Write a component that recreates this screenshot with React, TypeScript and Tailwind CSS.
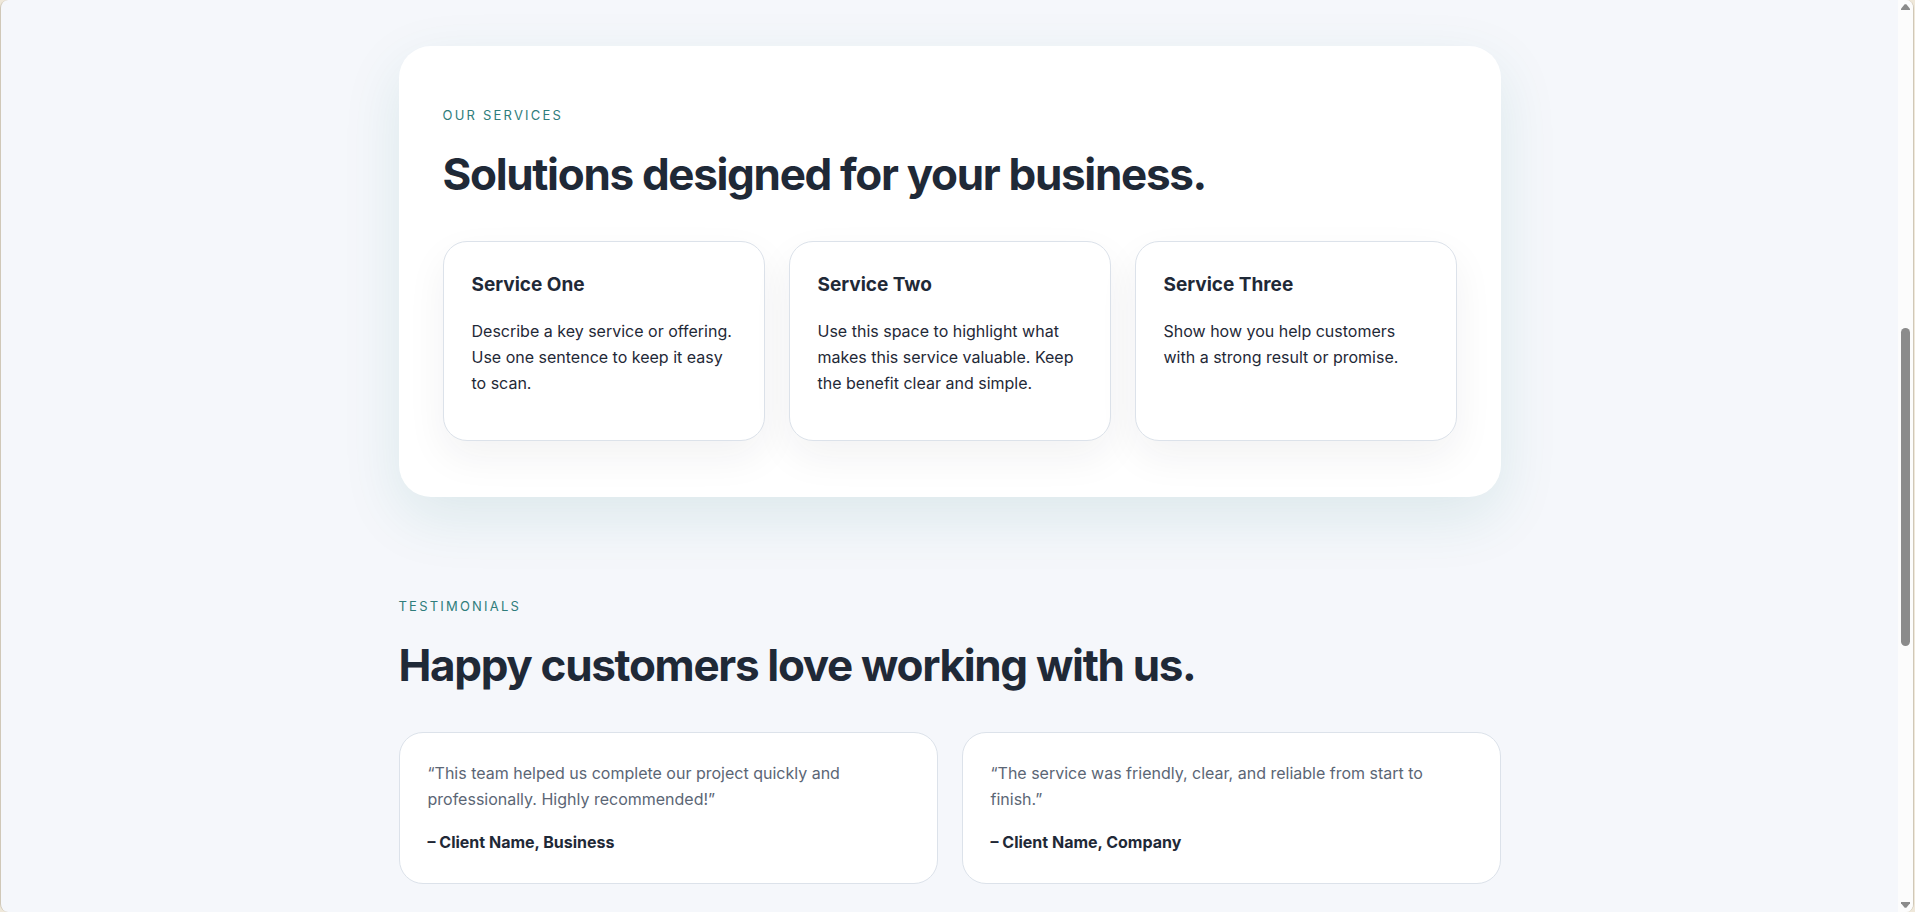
import type { ReactNode } from "react";

interface Service {
  title: string;
  text: string;
}

interface Testimonial {
  quote: string;
  author: string;
}

const services: Service[] = [
  {
    title: "Service One",
    text: "Describe a key service or offering. Use one sentence to keep it easy to scan.",
  },
  {
    title: "Service Two",
    text: "Use this space to highlight what makes this service valuable. Keep the benefit clear and simple.",
  },
  {
    title: "Service Three",
    text: "Show how you help customers with a strong result or promise.",
  },
];

const testimonials: Testimonial[] = [
  {
    quote:
      "“This team helped us complete our project quickly and professionally. Highly recommended!”",
    author: "– Client Name, Business",
  },
  {
    quote:
      "“The service was friendly, clear, and reliable from start to finish.”",
    author: "– Client Name, Company",
  },
];

function SectionHeading({ label, children }: { label: string; children: ReactNode }) {
  return (
    <header className="mb-[37px]">
      <p className="mb-4 text-[13px] leading-[26px] tracking-[0.17em] text-[#2f7d7b] uppercase">
        {label}
      </p>
      <h2 className="text-[44px] leading-[60px] font-bold tracking-[-0.03em]">
        {children}
      </h2>
    </header>
  );
}

function ServiceCard({ service }: { service: Service }) {
  return (
    <article className="rounded-3xl border border-[#dce2ea] bg-white px-7 pt-7 pb-11 shadow-[0_16px_40px_rgba(31,41,55,0.06)]">
      <h3 className="mb-[18px] text-[19px] leading-[30px] font-bold">{service.title}</h3>
      <p className="leading-[26px]">{service.text}</p>
    </article>
  );
}

function TestimonialCard({ testimonial }: { testimonial: Testimonial }) {
  return (
    <article className="rounded-3xl border border-[#dce2ea] bg-white px-7 pt-[27px] pb-7">
      <p className="mb-[17px] leading-[26px] text-[#5b6675]">{testimonial.quote}</p>
      <strong className="block leading-[26px] font-bold">{testimonial.author}</strong>
    </article>
  );
}

function Scrollbar() {
  return (
    <div
      aria-hidden="true"
      className="flex w-[15px] shrink-0 flex-col items-center bg-[#fcfcfc] py-1 text-[#8b8b8b]"
    >
      <svg width="9" height="6" viewBox="0 0 9 6" fill="currentColor">
        <path d="M3.7 0.3h1.6L9 4.8V6H0V4.8z" />
      </svg>
      {/* Thumb */}
      <div className="flex w-[9px] flex-1 flex-col py-1">
        <div className="grow-[314]" />
        <div className="grow-[318] rounded-full bg-[#8b8b8b]" />
        <div className="grow-[252]" />
      </div>
      <svg width="9" height="6" viewBox="0 0 9 6" fill="currentColor">
        <path d="M0 0h9v1.2L5.3 5.7H3.7L0 1.2z" />
      </svg>
    </div>
  );
}

export default function App() {
  return (
    <div className="h-screen bg-[#efe8da] pr-px font-['Inter',sans-serif] text-base text-[#1f2937]">
      <div className="flex h-full overflow-hidden rounded-lg border-x border-[#d0c8b8] bg-[#f5f7fb]">
        <main className="min-w-0 flex-1 overflow-hidden">
          <div className="mx-auto max-w-[1150px] px-6 pt-[46px]">
            {/* Services */}
            <section className="rounded-[32px] bg-white px-11 py-14 shadow-[0_20px_60px_rgba(15,118,110,0.11)]">
              <SectionHeading label="Our Services">
                Solutions designed for your business.
              </SectionHeading>
              <div className="grid grid-cols-3 gap-6">
                {services.map((service) => (
                  <ServiceCard key={service.title} service={service} />
                ))}
              </div>
            </section>

            {/* Testimonials */}
            <section className="pt-24 pb-14">
              <SectionHeading label="Testimonials">
                Happy customers love working with us.
              </SectionHeading>
              <div className="grid grid-cols-2 gap-6">
                {testimonials.map((testimonial) => (
                  <TestimonialCard key={testimonial.author} testimonial={testimonial} />
                ))}
              </div>
            </section>
          </div>
        </main>
        <Scrollbar />
      </div>
    </div>
  );
}
